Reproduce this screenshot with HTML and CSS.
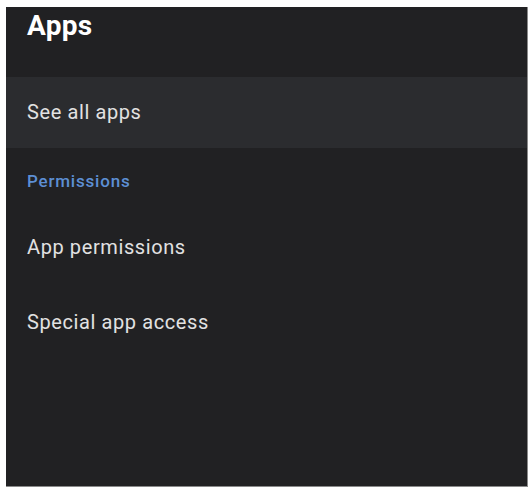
FILE: index.html
```html
<!DOCTYPE html>
<html>
	<head>
		<meta charset="UTF-8">
		<title>Apps</title>
		<link rel="stylesheet" href="styles.css">
	</head>
	<body>
		<div class="panel">
			<div class="title">Apps</div>
			<div class="row current">See all apps</div>
			<div class="sub">Permissions</div>
			<div class="row">App permissions</div>
			<div class="row">Special app access</div>
		</div>
	</body>
</html>
```
FILE: styles.css
```css
*{margin:0;padding:0;}
html,body{background:#fff;}
body{padding:7px 3px 2px 6px;height:489px;box-sizing:border-box;font-family:Roboto,"Noto Sans",sans-serif;}
.panel{height:100%;background:#212123;border-right:1px solid #8a8a8a;border-bottom:1px solid #8a8a8a;box-sizing:border-box;}
.title{height:70px;padding:0 0 0 21px;color:#fff;font-size:28px;font-weight:bold;line-height:37px;letter-spacing:0.3px;box-sizing:border-box;}
.row{height:75px;padding-left:21px;color:#e2e2e2;font-size:20px;line-height:75px;letter-spacing:0.6px;}
.current{height:71px;line-height:71px;background:#2b2c2f;}
.sub{height:62px;padding:15px 0 0 21px;color:#5d8fd4;font-size:17px;font-weight:500;line-height:36px;letter-spacing:0.8px;box-sizing:border-box;}
```
